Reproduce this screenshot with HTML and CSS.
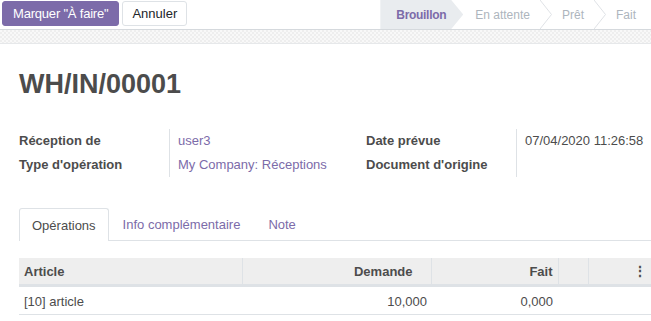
FILE: index.html
```html
<!DOCTYPE html>
<html lang="fr">
<head>
    <meta charset="UTF-8">
    <title>WH/IN/00001</title>
    <link rel="stylesheet" href="styles.css">
</head>
<body>
    <div class="control-bar">
        <div class="actions">
            <button class="btn btn-primary">Marquer "À faire"</button>
            <button class="btn btn-secondary">Annuler</button>
        </div>
        <div class="statusbar">
            <span class="step active">Brouillon</span>
            <span class="step first">En attente</span>
            <svg class="chevron" width="12" height="29" viewBox="0 0 12 29"><polyline points="0,0 11.5,14.5 0,29" fill="none" stroke="#dfe2e6" stroke-width="1"/></svg>
            <span class="step">Prêt</span>
            <svg class="chevron" width="12" height="29" viewBox="0 0 12 29"><polyline points="0,0 11.5,14.5 0,29" fill="none" stroke="#dfe2e6" stroke-width="1"/></svg>
            <span class="step last">Fait</span>
        </div>
    </div>
    <div class="band"></div>

    <div class="sheet">
        <h1 class="title">WH/IN/00001</h1>

        <div class="groups">
            <div class="group">
                <div class="labels">
                    <div class="label">Réception de</div>
                    <div class="label">Type d'opération</div>
                </div>
                <div class="values">
                    <div class="value link">user3</div>
                    <div class="value link">My Company: Réceptions</div>
                </div>
            </div>
            <div class="group last-group">
                <div class="labels">
                    <div class="label">Date prévue</div>
                    <div class="label">Document d'origine</div>
                </div>
                <div class="values">
                    <div class="value">07/04/2020 11:26:58</div>
                    <div class="value"></div>
                </div>
            </div>
        </div>

        <div class="tabs">
            <span class="tab active">Opérations</span>
            <span class="tab">Info complémentaire</span>
            <span class="tab">Note</span>
        </div>

        <table class="lines">
            <colgroup>
                <col class="w-article">
                <col class="w-demand">
                <col class="w-done">
                <col class="w-empty">
                <col class="w-opt">
            </colgroup>
            <thead>
                <tr>
                    <th>Article</th>
                    <th class="num head-demand">Demande</th>
                    <th class="num">Fait</th>
                    <th></th>
                    <th class="num head-opt"><span class="dots">⋮</span></th>
                </tr>
            </thead>
            <tbody>
                <tr>
                    <td>[10] article</td>
                    <td class="num tight">10,000</td>
                    <td class="num">0,000</td>
                    <td></td>
                    <td></td>
                </tr>
            </tbody>
        </table>
    </div>
</body>
</html>
```

FILE: styles.css
```css
body {
    margin: 0;
    font-family: "Liberation Sans", Arial, sans-serif;
    font-size: 13px;
    color: #4c4c4c;
    background: #fff;
    overflow: hidden;
}
.control-bar {
    height: 29px;
    display: flex;
    justify-content: space-between;
    align-items: flex-start;
    background: #fff;
}
.actions {
    display: flex;
    gap: 3px;
    padding: 1px 0 0 2px;
}
.btn {
    font-family: inherit;
    font-size: 13px;
    height: 25px;
    border-radius: 3px;
    padding: 0 9px;
    cursor: pointer;
}
.btn-primary {
    background: #7c6ba9;
    border: 1px solid #7c6ba9;
    color: #fff;
    padding: 0 10px;
    letter-spacing: -0.2px;
}
.btn-secondary {
    background: #fff;
    border: 1px solid #dee2e6;
    color: #212529;
}
.statusbar {
    display: flex;
    align-items: stretch;
    height: 29px;
    font-size: 12px;
    color: #adb5bd;
}
.step {
    display: flex;
    align-items: center;
    padding: 0 10px;
}
.step.active {
    color: #7c6ba9;
    font-weight: bold;
    letter-spacing: -0.3px;
    background: #e9ecef;
    padding: 0 17px 0 16px;
    clip-path: polygon(0 0, calc(100% - 12px) 0, 100% 50%, calc(100% - 12px) 100%, 0 100%);
}
.step.first {
    padding-left: 12px;
}
.step.last {
    padding-right: 15px;
}
.chevron {
    display: block;
}
.band {
    height: 13px;
    border-top: 1px solid #d5d9dd;
    border-bottom: 1px solid #e6e8ea;
    background-color: #f4f4f4;
    background-image: repeating-conic-gradient(#eeeeee 0 25%, #f8f8f8 0 50%);
    background-size: 4px 4px;
}
.sheet {
    padding: 0 0 0 19px;
    overflow: hidden;
}
.title {
    margin: 0;
    padding-top: 24px;
    font-size: 27px;
    line-height: 32px;
    font-weight: bold;
    color: #4c4c4c;
}
.groups {
    display: flex;
    margin-top: 29px;
}
.group {
    display: flex;
    flex-shrink: 0;
    width: 347px;
}
.group.last-group {
    flex: 1;
    min-width: 0;
}
.labels {
    width: 150px;
    flex-shrink: 0;
}
.values {
    border-left: 1px solid #dee2e6;
    padding: 0 0 0 8px;
    height: 48px;
}
.label {
    font-weight: bold;
    line-height: 24px;
    white-space: nowrap;
}
.value {
    line-height: 24px;
    height: 24px;
    white-space: nowrap;
}
.link {
    color: #7c6ba9;
}
.tabs {
    display: flex;
    margin-top: 31px;
    border-bottom: 1px solid #dee2e6;
    height: 32px;
}
.tab {
    display: flex;
    align-items: center;
    padding: 0 13px;
    color: #7c6ba9;
    border: 1px solid transparent;
    border-bottom: none;
    border-radius: 3px 3px 0 0;
}
.tab.active {
    color: #4c4c4c;
    border-color: #dee2e6;
    background: #fff;
    margin-bottom: -1px;
    height: 32px;
    padding: 0 12px;
}
.lines {
    margin-top: 17px;
    width: 632px;
    table-layout: fixed;
    border-collapse: collapse;
}
.w-article { width: 223px; }
.w-demand { width: 189px; }
.w-done { width: 127px; }
.w-empty { width: 30px; }
.w-opt { width: 63px; }
.lines th {
    background: #eeeeee;
    font-weight: bold;
    text-align: left;
    height: 26px;
    padding: 0 5px;
    border-left: 1px solid #dee2e6;
    border-bottom: 3px solid #dee2e6;
}
.lines th:first-child {
    border-left: none;
}
.lines td {
    height: 26px;
    padding: 1px 5px 0;
    border-bottom: 1px solid #dee2e6;
}
.lines .num {
    text-align: right;
}
.lines .head-demand {
    padding-right: 18px;
}
.lines .head-opt {
    padding-right: 4px;
}
.lines .tight {
    padding-right: 4px;
}
.dots {
    font-weight: bold;
    font-size: 14px;
}
```
